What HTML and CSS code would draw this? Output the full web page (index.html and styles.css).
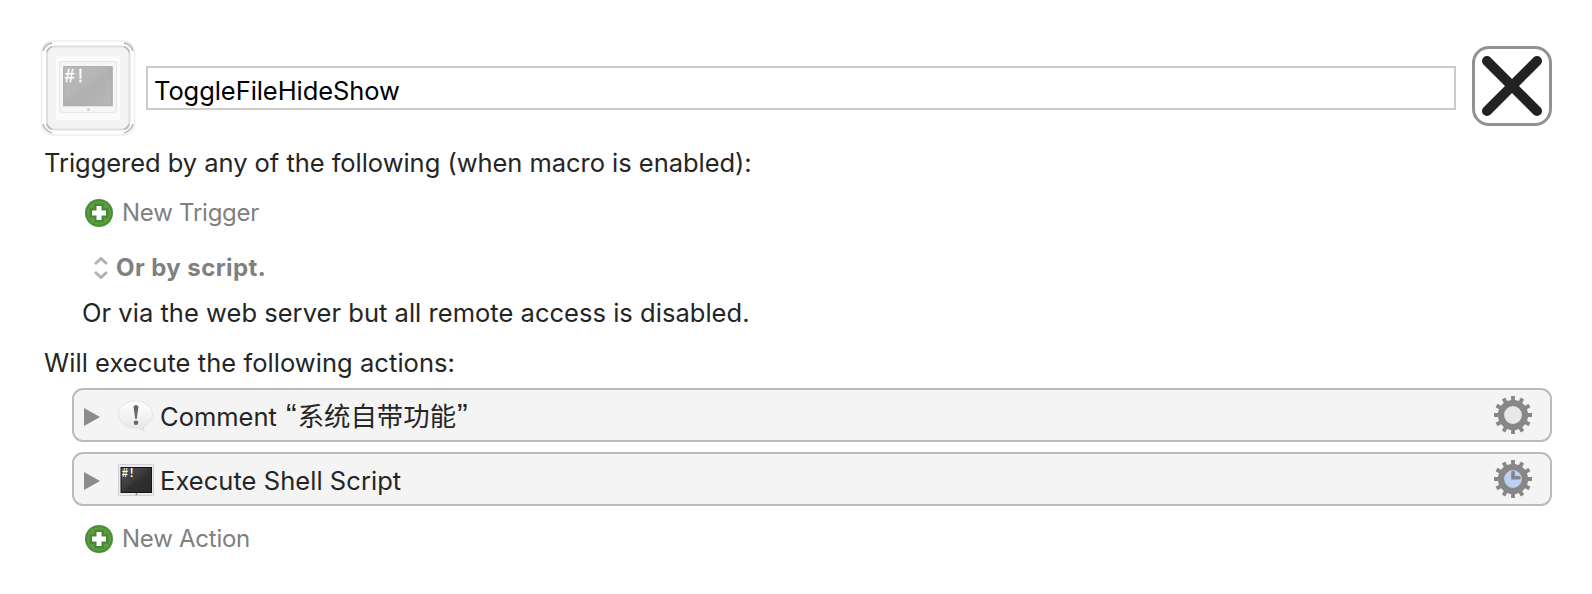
FILE: index.html
```html
<!DOCTYPE html>
<html lang="en">
<head>
<meta charset="utf-8">
<title>ToggleFileHideShow</title>
<link rel="stylesheet" href="styles.css">
</head>
<body>
<svg class="defs" aria-hidden="true">
  <defs>
    <linearGradient id="dark" x1="0" y1="0" x2="1" y2="1"><stop offset="0" stop-color="#555"/><stop offset=".45" stop-color="#3c3c3c"/><stop offset=".55" stop-color="#303030"/><stop offset="1" stop-color="#2a2a2a"/></linearGradient>
    <linearGradient id="faded" x1="0" y1="0" x2="1" y2="1"><stop offset="0" stop-color="#bcbcbc"/><stop offset=".42" stop-color="#b5b5b5"/><stop offset=".55" stop-color="#b0b0b0"/><stop offset="1" stop-color="#b8b8b8"/></linearGradient>
    <linearGradient id="bubble" x1="0" y1="0" x2="0" y2="1"><stop offset="0" stop-color="#fff"/><stop offset="1" stop-color="#e6e6e6"/></linearGradient>
    <symbol id="plus" viewBox="0 0 28 28">
      <circle cx="14" cy="14" r="14" fill="#4b8e3b"/>
      <circle cx="14" cy="14" r="11.7" fill="#5d9d3b"/>
      <path d="M9.3 4.7h9.4v4.6h4.6v9.4h-4.6v4.6H9.3v-4.6H4.7V9.3h4.6z" fill="#468739"/>
      <path d="M11.5 7h5v4.5H21v5h-4.5V21h-5v-4.500H7v-5h4.500z" fill="#fff"/>
    </symbol>
    <symbol id="gear" viewBox="-20 -20 40 40">
      <circle r="12" fill="none" stroke="#868786" stroke-width="6.200"/>
      <g stroke="#868786" stroke-width="3.800">
        <path d="M0-19V-13M0 19V13M-19 0H-13M19 0H13"/>
        <path d="M0-19V-13M0 19V13M-19 0H-13M19 0H13" transform="rotate(30)"/>
        <path d="M0-19V-13M0 19V13M-19 0H-13M19 0H13" transform="rotate(60)"/>
      </g>
    </symbol>
  </defs>
</svg>
<main class="editor">
  <header class="head">
    <svg class="macro-icon" viewBox="0 0 96 96">
      <rect x="1.500" y="1" width="93" height="94" rx="11" fill="#fff" stroke="#f2f2f2" stroke-width="2"/>
      <rect x="7" y="6.500" width="82.500" height="83" rx="7" fill="#f4f4f4" stroke="#dedede" stroke-width="2"/>
      <path d="M3 11Q5 4 12 3M84 3Q91 4 93 11M93 84Q91 91 84 93M12 93Q5 91 3 84" fill="none" stroke="#bdbdbd" stroke-width="1.800"/>
      <path d="M7 12Q8 8 12 7M84 7Q88 8 89 12M89 84Q88 88 84 89M12 89Q8 88 7 84" fill="none" stroke="#bdbdbd" stroke-width="1.800"/>
      <rect x="16" y="16" width="64" height="64" fill="#fbfbfb"/>
      <rect x="19.500" y="21.500" width="57" height="51" rx="3" fill="#f6f6f7" stroke="#e6e6e8"/>
      <rect x="23.700" y="26.700" width="48.500" height="39" fill="url(#faded)" stroke="#a5a5a5"/>
      <text class="mono" transform="translate(24.500 42) scale(1 1.180)" font-size="17" fill="#fff" stroke="#fff" stroke-width=".3" textLength="21">#!</text>
      <circle cx="48.500" cy="69.500" r="1.500" fill="#cfcfcf"/>
    </svg>
    <div class="name">ToggleFileHideShow</div>
    <button class="close" aria-label="Close">
      <svg viewBox="0 0 74 74"><path d="M12 12L62 62M62 12L12 62" stroke="#222" stroke-width="10" stroke-linecap="round"/></svg>
    </button>
  </header>
  <p class="line triggered">Triggered by any of the following (when macro is enabled):</p>
  <div class="add add-trigger"><svg><use href="#plus"/></svg><span>New Trigger</span></div>
  <div class="script">
    <svg viewBox="0 0 14 22"><path d="M1 7L7 1.500L13 7M1 15L7 20.500L13 15" fill="none" stroke="#b0b0b0" stroke-width="2.800"/></svg>
    <span>Or by script.</span>
  </div>
  <p class="line web">Or via the web server but all remote access is disabled.</p>
  <p class="line will">Will execute the following actions:</p>
  <section class="actions">
    <div class="action">
      <svg class="arrow" viewBox="0 0 16 18"><path d="M0 0L16 9L0 18z" fill="#8b8b8b"/></svg>
      <svg class="kind" viewBox="0 0 36 32">
        <path d="M17.500 1C27 1 34.500 7 34.500 14.500C34.500 19.500 31 24 25.500 26.500L25.800 31L20.500 28C8 29 .5 22 .5 14.500C.5 7 8 1 17.500 1z" fill="url(#bubble)" stroke="#dedede" stroke-width=".8"/>
        <path d="M15.500 6.500Q18 3.500 20.500 6.500L18.700 19H17.300z" fill="#666"/><circle cx="18" cy="22.700" r="2.300" fill="#666"/>
      </svg>
      <span class="label">Comment <span class="quote open">“</span><span class="cjk">系统自带功能</span><span class="quote">”</span></span>
      <svg class="gear" viewBox="-20 -20 40 40"><circle r="10" fill="#e8e8e8"/><use href="#gear" x="-20" y="-20" width="40" height="40"/></svg>
    </div>
    <div class="action">
      <svg class="arrow" viewBox="0 0 16 18"><path d="M0 0L16 9L0 18z" fill="#8b8b8b"/></svg>
      <svg class="kind" viewBox="0 0 36 32">
        <rect x=".5" y=".5" width="35" height="31" rx="1" fill="#ebebf2" stroke="#d0d0d6"/>
        <rect x="3" y="3.500" width="30.500" height="25" fill="url(#dark)" stroke="#151515"/>
        <text class="mono" transform="translate(3.800 13) scale(1 1.200)" font-size="10.500" font-weight="bold" fill="#fff" textLength="13">#!</text>
        <circle cx="18.500" cy="30.300" r="1" fill="#888"/>
      </svg>
      <span class="label exec">Execute Shell Script</span>
      <svg class="gear" viewBox="-20 -20 40 40"><circle r="10" fill="#bdd0f2"/><use href="#gear" x="-20" y="-20" width="40" height="40"/><path d="M0-6.500V-1.300H6" fill="none" stroke="#80868c" stroke-width="3.600" stroke-linecap="round"/></svg>
    </div>
  </section>
  <div class="add add-action"><svg><use href="#plus"/></svg><span>New Action</span></div>
</main>
</body>
</html>
```
FILE: styles.css
```css
* { box-sizing: border-box; }
body { margin: 0; background: #fff; color: #252525; font-family: Inter, "Noto Sans CJK SC", sans-serif; font-size: 25.5px; line-height: 30px; white-space: nowrap; }
.defs { position: absolute; width: 0; height: 0; }
svg { display: block; flex: none; }
.editor { width: 1592px; height: 594px; padding: 40px 40px 0 40px; overflow: hidden; }
.head { display: flex; align-items: flex-start; height: 96px; }
.macro-icon { width: 96px; height: 96px; }
.mono { font-family: "Liberation Mono", monospace; }
.name { width: 1310px; height: 44px; margin: 26px 16px 0 10px; padding: 8px 0 0 6px; border: 2px solid #ccc; color: #000; letter-spacing: -.07px; }
.close { width: 80px; height: 80px; margin-top: 6px; padding: 0; border: 3px solid #919191; border-radius: 17px; background: #fff; }
.close svg { width: 74px; height: 74px; }
.line { margin: 0; height: 30px; }
.triggered { margin-top: 12px; padding-left: 4px; letter-spacing: -.04px; }
.add { display: flex; align-items: center; height: 30px; padding-left: 45px; gap: 9px; font-size: 24px; letter-spacing: -.25px; color: #808080; }
.add svg { width: 28px; height: 28px; }
.add-trigger { margin-top: 20px; }
.script { display: flex; align-items: center; height: 30px; margin-top: 25px; padding-left: 54px; gap: 8px; font-size: 24px; font-weight: 700; letter-spacing: .42px; color: #808080; }
.script svg { width: 14px; height: 22px; }
.web { margin-top: 15px; padding-left: 42px; letter-spacing: .03px; }
.will { margin-top: 20px; padding-left: 4px; letter-spacing: .05px; }
.actions { display: flex; flex-direction: column; gap: 10px; margin: 10px 0 0 32px; }
.action { display: flex; align-items: center; height: 54px; padding: 0 17px 0 10px; border: 2px solid #bbb; border-radius: 11px; background: #f4f4f4; }
.arrow { width: 16px; height: 18px; margin: 4px 18px 0 0; }
.kind { width: 36px; height: 32px; margin: 2px 6px 0 0; }
.label { flex: 1; margin-top: 3px; height: 30px; }
.exec { letter-spacing: .05px; }
.quote { margin-left: 1px; font-family: "Liberation Sans", sans-serif; font-size: 32px; line-height: 0; }
.open { margin: 0 1px 0 2px; letter-spacing: 0; }
.cjk { font-size: 26.4px; line-height: 0; }
.gear { width: 40px; height: 40px; }
.add-action { margin-top: 18px; }
```
